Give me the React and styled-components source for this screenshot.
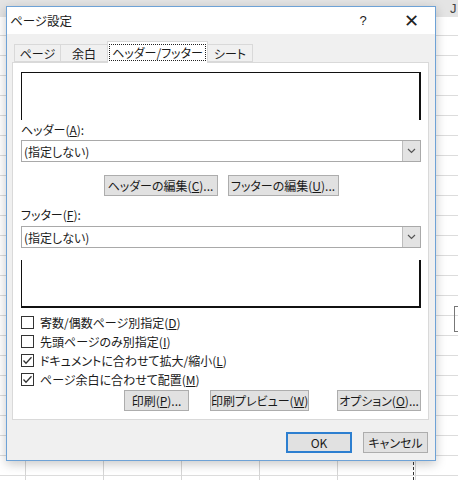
import React from 'react';
import styled, { createGlobalStyle } from 'styled-components';

const GlobalStyle = createGlobalStyle`
  html, body { margin: 0; padding: 0; }
  body {
    font-family: "Noto Sans CJK JP", "Noto Sans", sans-serif;
    font-feature-settings: "palt" 1;
    font-size: 12px;
    color: #1a1a1a;
  }
  u { text-underline-offset: 1px; }
`;

const Sheet = styled.div`
  position: relative;
  width: 458px;
  height: 480px;
  overflow: hidden;
  box-sizing: border-box;
  padding: 6px 0 0 6px;
  background-color: #fff;
  background-image:
    linear-gradient(to bottom, #e4e4e4 17px, transparent 17px),
    linear-gradient(to right, #d6d6d6 1px, transparent 1px),
    linear-gradient(to bottom, #dcdcdc 1px, transparent 1px);
  background-size: 100% 100%, 78px 100%, 100% 20px;
  background-position: 0 0, 25px 0, 0 15px;
  background-repeat: no-repeat, repeat-x, repeat-y;
`;

const ColLetter = styled.span`
  position: absolute;
  left: 450px;
  top: 1px;
  font-family: "Liberation Sans", sans-serif;
  font-size: 13px;
  color: #444;
`;

const PageBreak = styled.div`
  position: absolute;
  left: 413px;
  top: 462px;
  height: 18px;
  border-left: 1px dashed #333;
`;

const ShapeEdge = styled.div`
  position: absolute;
  left: 454px;
  top: 306px;
  width: 8px;
  height: 24px;
  border: 1px solid #777;
  border-right: none;
`;

const Dialog = styled.div`
  width: 430px;
  height: 455px;
  box-sizing: border-box;
  border: 1px solid #6ea2d6;
  background: #f0f0f0;
  box-shadow: 0 3px 10px rgba(0, 0, 0, 0.22);
  display: flex;
  flex-direction: column;
`;

const TitleBar = styled.div`
  height: 27px;
  background: #fff;
  display: flex;
  align-items: center;
  padding-left: 3px;
`;

const Title = styled.span`
  flex: 1;
  font-size: 12.5px;
`;

const TitleButton = styled.span`
  width: 48px;
  height: 27px;
  display: flex;
  align-items: center;
  justify-content: center;
  font-family: "Liberation Sans", sans-serif;
  font-size: ${p => (p.$big ? '18px' : '13px')};
  font-weight: ${p => (p.$big ? 300 : 400)};
  color: #222;
`;

const Body = styled.div`
  flex: 1;
  display: flex;
  flex-direction: column;
  padding: 7px 6px 0 5px;
`;

const TabStrip = styled.div`
  height: 21px;
  display: flex;
  align-items: flex-end;
  padding-left: 2px;
  position: relative;
  z-index: 1;
`;

const Tab = styled.div`
  height: ${p => (p.$active ? '22px' : '18px')};
  margin-bottom: ${p => (p.$active ? '-1px' : '0')};
  width: ${p => p.$w}px;
  box-sizing: border-box;
  display: flex;
  align-items: center;
  justify-content: center;
  background: ${p => (p.$active ? '#fff' : '#f0f0f0')};
  border: 1px solid #d9d9d9;
  border-bottom: ${p => (p.$active ? 'none' : '1px solid #d9d9d9')};
  margin-left: ${p => (p.$first ? '0' : '-1px')};
  padding-top: ${p => (p.$active ? '0' : '1px')};
`;

const FocusText = styled.span`
  outline: 1px dotted #222;
  outline-offset: 0;
  line-height: 15px;
  padding: 0 2px;
`;

const Panel = styled.div`
  height: 358px;
  box-sizing: border-box;
  background: #fff;
  border: 1px solid #d9d9d9;
  padding: 9px 7px 0 8px;
  display: flex;
  flex-direction: column;
`;

const Preview = styled.div`
  height: 48px;
  box-sizing: border-box;
  border-left: 1px solid #111;
  border-right: 2px solid #111;
  border-top: ${p => (p.$footer ? 'none' : '1px solid #111')};
  border-bottom: ${p => (p.$footer ? '2px solid #111' : 'none')};
  margin-top: ${p => p.$mt || 0}px;
`;

const Label = styled.div`
  height: 16px;
  line-height: 16px;
  margin-top: ${p => p.$mt}px;
`;

const Combo = styled.div`
  height: 22px;
  box-sizing: border-box;
  border: 1px solid #a9a9a9;
  background: #fff;
  display: flex;
  align-items: center;
  margin-top: ${p => p.$mt}px;
`;

const ComboText = styled.span`
  flex: 1;
  padding-left: 2px;
`;

const ComboArrow = styled.span`
  width: 18px;
  height: 20px;
  box-sizing: border-box;
  border-left: 1px solid #bdbdbd;
  background: #e3e3e3;
  display: flex;
  align-items: center;
  justify-content: center;
`;

const ButtonRow = styled.div`
  display: flex;
  justify-content: ${p => p.$justify || 'center'};
  gap: ${p => p.$gap || 10}px;
  margin-top: ${p => p.$mt}px;
`;

const Button = styled.button`
  height: 21px;
  width: ${p => p.$w}px;
  box-sizing: border-box;
  padding: 0;
  margin: 0;
  font: inherit;
  color: #1a1a1a;
  background: #e1e1e1;
  border: 1px solid ${p => (p.$primary ? '#2d7fd0' : '#adadad')};
  box-shadow: ${p => (p.$primary ? 'inset 0 0 0 1px #2d7fd0' : 'none')};
  margin-left: ${p => p.$ml || 0}px;
  white-space: nowrap;
`;

const CheckList = styled.div`
  margin-top: 5px;
  display: flex;
  flex-direction: column;
`;

const CheckRow = styled.div`
  height: 19px;
  display: flex;
  align-items: center;
  gap: 6px;
  padding-left: 0;
`;

const Box = styled.span`
  width: 13px;
  height: 13px;
  box-sizing: border-box;
  border: 1px solid #333;
  background: #fff;
  display: flex;
  align-items: center;
  justify-content: center;
`;

const Footer = styled.div`
  display: flex;
  justify-content: flex-end;
  gap: 11px;
  margin-top: 12px;
  padding-right: 1px;
`;

function Checkbox({ checked, children }) {
  return (
    <CheckRow>
      <Box>
        {checked && (
          <svg width="11" height="11" viewBox="0 0 11 11">
            <polyline points="1.5,5.5 4,8.2 9.5,2.2" fill="none" stroke="#333" strokeWidth="1.3" />
          </svg>
        )}
      </Box>
      <span>{children}</span>
    </CheckRow>
  );
}

function Select({ mt }) {
  return (
    <Combo $mt={mt}>
      <ComboText>(指定しない)</ComboText>
      <ComboArrow>
        <svg width="9" height="6" viewBox="0 0 9 6">
          <polyline points="1,1 4.5,4.5 8,1" fill="none" stroke="#555" strokeWidth="1.2" />
        </svg>
      </ComboArrow>
    </Combo>
  );
}

export default function App() {
  return (
    <>
      <GlobalStyle />
      <Sheet>
        <ColLetter>J</ColLetter>
        <ShapeEdge />
        <PageBreak />
        <Dialog>
          <TitleBar>
            <Title>ページ設定</Title>
            <TitleButton>?</TitleButton>
            <TitleButton $big>✕</TitleButton>
          </TitleBar>
          <Body>
            <TabStrip>
              <Tab $w={47} $first>ページ</Tab>
              <Tab $w={48}>余白</Tab>
              <Tab $w={101} $active><FocusText>ヘッダー/フッター</FocusText></Tab>
              <Tab $w={46}>シート</Tab>
            </TabStrip>
            <Panel>
              <Preview />
              <Label $mt={2}>ヘッダー(<u>A</u>):</Label>
              <Select mt={2} />
              <ButtonRow $mt={13}>
                <Button $w={114}>ヘッダーの編集(<u>C</u>)...</Button>
                <Button $w={111}>フッターの編集(<u>U</u>)...</Button>
              </ButtonRow>
              <Label $mt={11}>フッター(<u>F</u>):</Label>
              <Select mt={3} />
              <Preview $footer $mt={12} />
              <CheckList>
                <Checkbox>寄数/偶数ページ別指定(<u>D</u>)</Checkbox>
                <Checkbox>先頭ページのみ別指定(<u>I</u>)</Checkbox>
                <Checkbox checked>ドキュメントに合わせて拡大/縮小(<u>L</u>)</Checkbox>
                <Checkbox checked>ページ余白に合わせて配置(<u>M</u>)</Checkbox>
              </CheckList>
              <ButtonRow $justify="flex-end" $gap={0} $mt={1}>
                <Button $w={65}>印刷(<u>P</u>)...</Button>
                <Button $w={99} $ml={11}>印刷プレビュー(<u>W</u>)</Button>
                <Button $w={84} $ml={18}>オプション(<u>O</u>)...</Button>
              </ButtonRow>
            </Panel>
            <Footer>
              <Button $w={66} $primary>OK</Button>
              <Button $w={65}>キャンセル</Button>
            </Footer>
          </Body>
        </Dialog>
      </Sheet>
    </>
  );
}
